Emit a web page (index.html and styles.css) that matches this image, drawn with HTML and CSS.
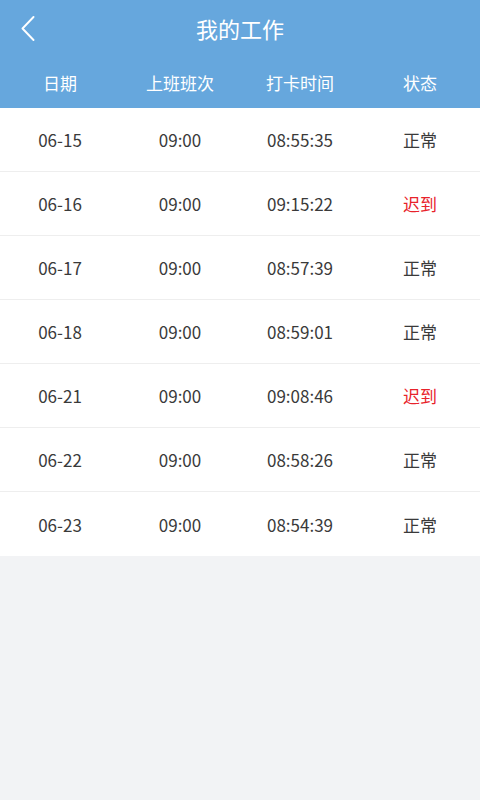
FILE: index.html
```html
<!DOCTYPE html>
<html lang="zh-CN">
<head>
<meta charset="utf-8">
<link rel="stylesheet" href="styles.css">
</head>
<body>
<div class="header">
  <div class="topbar">
    <span class="back"><svg width="14" height="25" viewBox="0 0 14 25"><path d="M12.5 1 L1.5 12.5 L12.5 24" fill="none" stroke="#fff" stroke-width="1.9" stroke-linecap="round" stroke-linejoin="round"/></svg></span>
    <span class="title">我的工作</span>
  </div>
  <div class="cols">
    <span>日期</span><span>上班班次</span><span>打卡时间</span><span>状态</span>
  </div>
</div>
<div class="list">
  <div class="row"><span>06-15</span><span>09:00</span><span>08:55:35</span><span>正常</span></div>
  <div class="row"><span>06-16</span><span>09:00</span><span>09:15:22</span><span class="late">迟到</span></div>
  <div class="row"><span>06-17</span><span>09:00</span><span>08:57:39</span><span>正常</span></div>
  <div class="row"><span>06-18</span><span>09:00</span><span>08:59:01</span><span>正常</span></div>
  <div class="row"><span>06-21</span><span>09:00</span><span>09:08:46</span><span class="late">迟到</span></div>
  <div class="row"><span>06-22</span><span>09:00</span><span>08:58:26</span><span>正常</span></div>
  <div class="row"><span>06-23</span><span>09:00</span><span>08:54:39</span><span>正常</span></div>
</div>
</body>
</html>
```
FILE: styles.css
```css
html, body {
  margin: 0;
  padding: 0;
  background: #f2f3f5;
  font-family: "Noto Sans CJK SC", "Noto Sans", sans-serif;
}
.header {
  background: #66a7dd;
  color: #fff;
  height: 108px;
}
.topbar {
  position: relative;
  height: 56px;
  display: flex;
  align-items: center;
  justify-content: center;
}
.back {
  position: absolute;
  left: 21px;
  top: 16px;
  display: flex;
}
.title {
  font-size: 22px;
  line-height: 56px;
}
.cols {
  display: grid;
  grid-template-columns: repeat(4, 1fr);
  height: 52px;
  align-items: center;
  font-size: 17px;
  text-align: center;
}
.cols span {
  padding-top: 1px;
}
.list {
  background: #fff;
}
.row {
  display: grid;
  grid-template-columns: repeat(4, 1fr);
  height: 63px;
  align-items: center;
  text-align: center;
  font-size: 17px;
  color: #3a3a3a;
  border-bottom: 1px solid #eeeeee;
}
.row:last-child {
  border-bottom: none;
  height: 64px;
}
.late {
  color: #e8232b;
}
```
